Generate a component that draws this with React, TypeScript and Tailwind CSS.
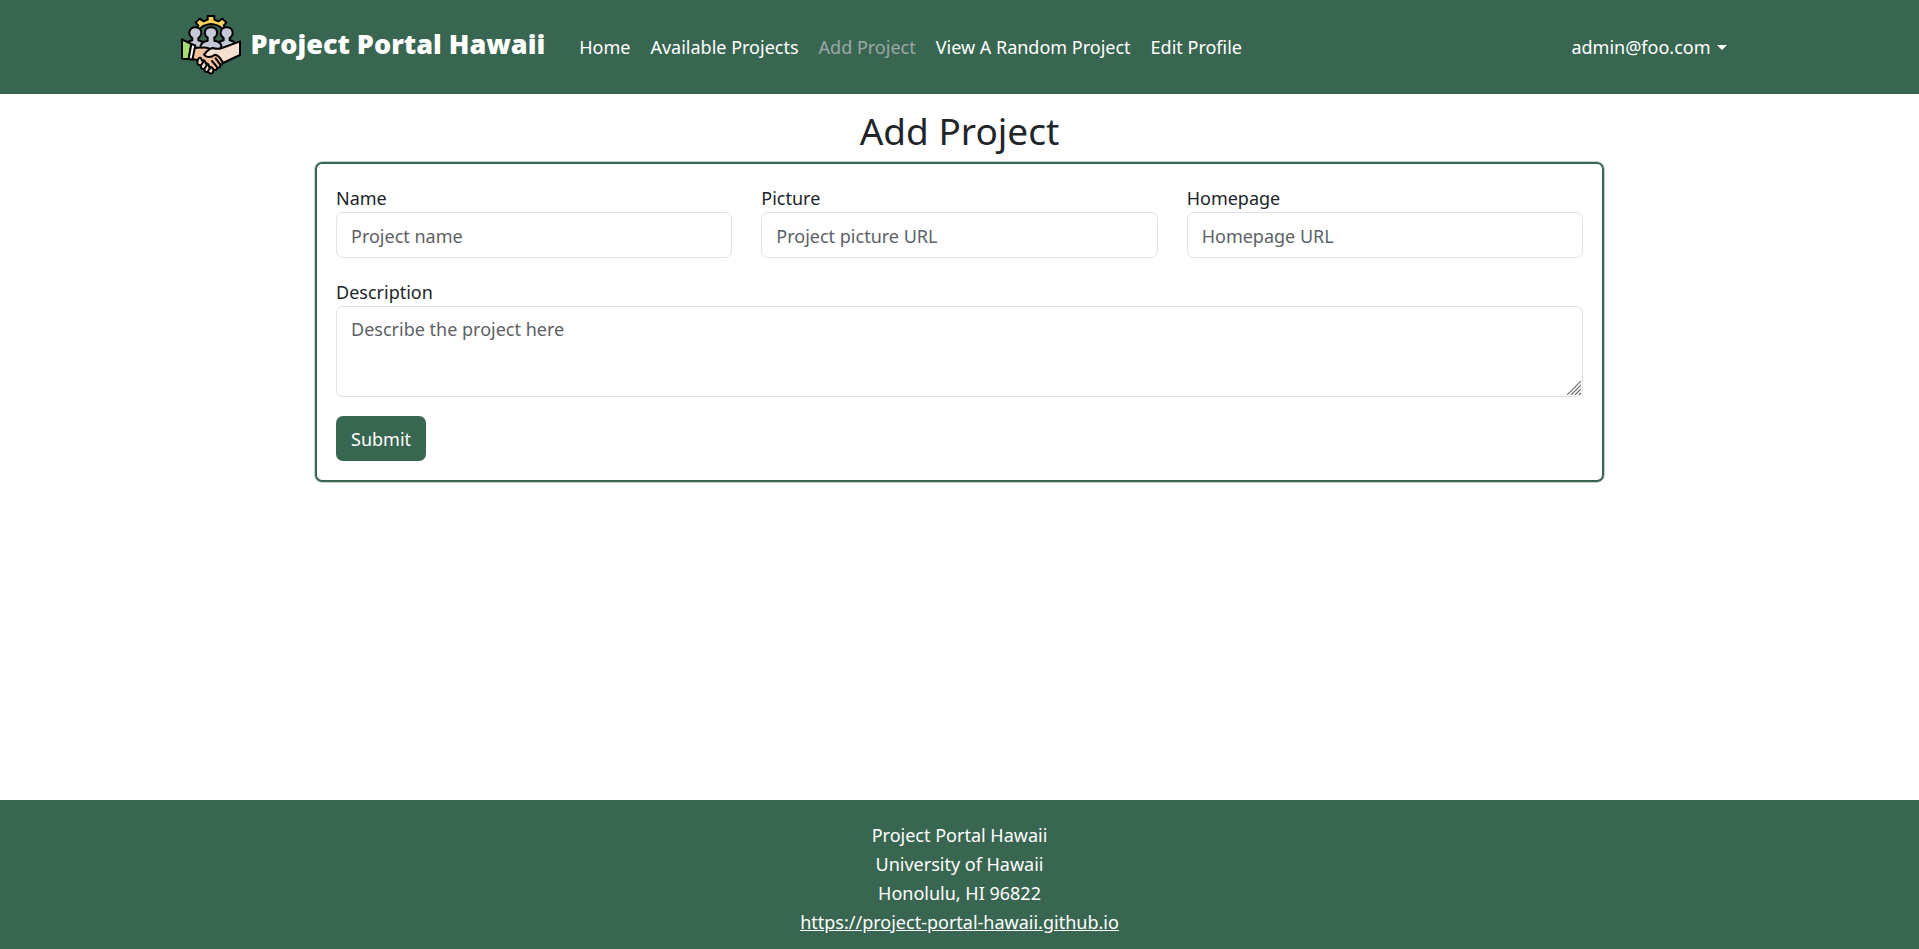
import React from "react";

const people = [
  { x: 43, y: 80 },
  { x: 137, y: 80 },
];

function Logo() {
  return (
    <svg viewBox="0 0 180 180" className="size-15 shrink-0" aria-hidden="true" stroke="#000" strokeWidth="6" strokeLinejoin="round" strokeLinecap="round">
      <path fill="#fbd05e" d="M47 38 L53 44 L60 38 Q72 28 90 27 Q108 28 120 38 L127 44 L133 38 L128 32 L136 23 L124 11 L112 19 L100 14 L100 3 L80 3 L80 14 L68 19 L56 11 L44 23 L52 32 Z" />
      {people.map((p) => (
        <path key={p.x} fill="#c5c9d6" d={`M${p.x - 28} ${p.y + 8} Q${p.x - 22} ${p.y - 2} ${p.x - 9} ${p.y - 4} L${p.x - 9} ${p.y - 11} C${p.x - 25} ${p.y - 22} ${p.x - 18} ${p.y - 43} ${p.x} ${p.y - 43} C${p.x + 18} ${p.y - 43} ${p.x + 25} ${p.y - 22} ${p.x + 9} ${p.y - 11} L${p.x + 9} ${p.y - 4} Q${p.x + 22} ${p.y - 2} ${p.x + 28} ${p.y + 8} L${p.x + 22} ${p.y + 28} L${p.x - 22} ${p.y + 28} Z`} />
      ))}
      <path fill="#c5c9d6" d="M59 98 Q57 80 80 77 L80 68 C66 58 70 37 90 37 C110 37 114 58 100 68 L100 77 Q123 80 121 98 L110 112 L68 112 Z" />
      <path fill="#f1c19d" d="M38 101 Q50 97 63 98 Q80 96 88 103 L110 114 L124 138 Q128 149 118 149 Q119 160 109 158 Q106 168 98 164 L58 137 L34 132 Z" />
      <path fill="#f6dfcc" d="M52 131 Q60 124 63 137 Q73 133 74 146 Q84 144 84 156 Q97 154 97 168 Q95 178 86 175 L80 170 Q70 173 70 162 Q59 164 60 151 Q48 151 49 140 Z" />
      <path fill="none" d="M60 151 L67 140 M70 162 L78 150 M80 170 L88 158 M93 138 L109 157 M104 130 L118 149" />
      <path fill="#f6dfcc" d="M177 79 L177 120 L126 144 Q115 121 102 119 Q88 130 75 124 L69 119 Q83 100 96 99 Q109 104 123 99 Z" />
      <path fill="#a5dc6d" d="M3 73 L31 87 L23 132 L3 131 Z" />
      <path fill="#fff" d="M31 87 L43 91 L34 134 L23 132 Z" />
    </svg>
  );
}

const links = ["Home", "Available Projects", "Add Project", "View A Random Project", "Edit Profile"];

const fields = [
  { id: "name", label: "Name", placeholder: "Project name" },
  { id: "picture", label: "Picture", placeholder: "Project picture URL" },
  { id: "homepage", label: "Homepage", placeholder: "Homepage URL" },
];

const control =
  "block w-full rounded-[7px] border border-[#dee2e6] bg-white px-3.5 text-[#212529] placeholder:text-[#5c6166]";

export default function App() {
  return (
    <div className="flex min-h-screen flex-col bg-white font-['Noto_Sans','Open_Sans',sans-serif] text-[18px] leading-[29px] text-[#212529]">
      <header className="bg-[#396651] text-white">
        <nav className="mx-auto flex h-[94px] max-w-[1586px] items-center px-3.5">
          <a href="#home" className="mr-6 flex items-center gap-2.5 pb-1">
            <Logo />
            <span className="pb-1 font-['Open_Sans','Noto_Sans',sans-serif] text-[27px] font-extrabold whitespace-nowrap">Project Portal Hawaii</span>
          </a>
          <ul className="flex items-center">
            {links.map((l) => (
              <li key={l}>
                <a href="#nav" className={l === "Add Project" ? "px-2.5 text-[#9ba8a8]" : "px-2.5"}>
                  {l}
                </a>
              </li>
            ))}
          </ul>
          <button type="button" className="ml-auto flex items-center gap-1.5 px-3">
            admin@foo.com
            <svg viewBox="0 0 10 5" className="h-[5px] w-2.5" fill="currentColor" aria-hidden="true">
              <path d="M0 0h10L5 5z" />
            </svg>
          </button>
        </nav>
      </header>

      <main className="mx-auto w-full max-w-[1319px] flex-1 px-3.5 pt-3.5">
        <h1 className="mb-2 text-center text-[37px] leading-[45px]">Add Project</h1>
        <div className="rounded-lg border border-[#c9d3ce]">
          <form className="flex flex-col items-start gap-[19px] rounded-[7px] border-2 border-[#396651] p-[19px]" onSubmit={(e) => e.preventDefault()}>
            <div className="grid w-full grid-cols-3 gap-[29px]">
              {fields.map((f) => (
                <div key={f.id}>
                  <label htmlFor={f.id} className="block pt-0.5 leading-[27px]">{f.label}</label>
                  <input id={f.id} type="text" placeholder={f.placeholder} className={`${control} h-[46px] pt-0.5`} />
                </div>
              ))}
            </div>
            <div className="w-full">
              <label htmlFor="description" className="block pt-0.5 leading-[27px]">Description</label>
              <div className="relative">
                <textarea id="description" placeholder="Describe the project here" className={`${control} h-[91px] resize-y py-2 [&::-webkit-resizer]:bg-transparent`} />
                <svg viewBox="0 0 14 14" className="pointer-events-none absolute right-0.5 bottom-0.5 size-3.5" stroke="#6f6f6f" strokeWidth="1.2" aria-hidden="true">
                  <path d="M0 14L14 0M4 14L14 4M8 14L14 8M12 14L14 12" />
                </svg>
              </div>
            </div>
            <button type="submit" className="h-[45px] rounded-[7px] bg-[#396651] px-[15px] pt-0.5 text-white">
              Submit
            </button>
          </form>
        </div>
      </main>

      <footer className="bg-[#396651] pt-[21px] pb-3 text-center text-white">
        <p>Project Portal Hawaii</p>
        <p>University of Hawaii</p>
        <p>Honolulu, HI 96822</p>
        <p>
          <a href="https://project-portal-hawaii.github.io" className="underline">https://project-portal-hawaii.github.io</a>
        </p>
      </footer>
    </div>
  );
}
